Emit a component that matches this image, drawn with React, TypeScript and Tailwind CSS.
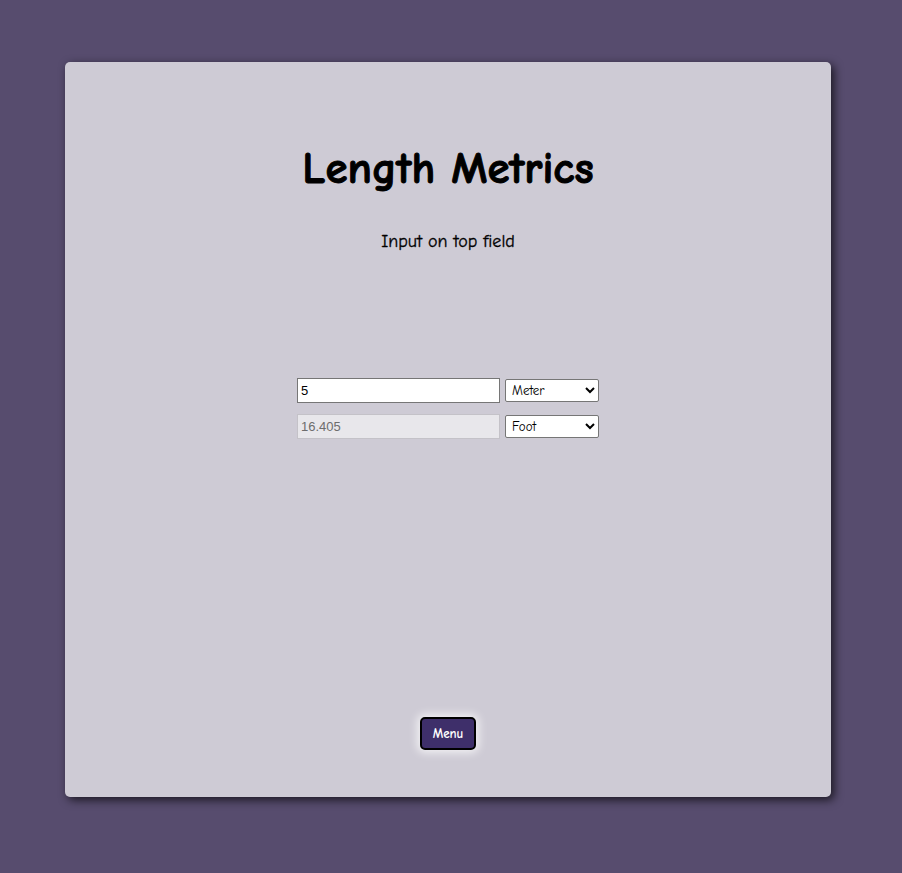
import React from "react";

export default function App() {
  const comic = { fontFamily: '"Comic Sans MS", "Comic Neue", "Lato", sans-serif' };
  return (
    <div className="min-h-[873px] w-[902px] bg-[#574c6e] pt-[62px] pl-[65px]" style={comic}>
      <div className="w-[766px] h-[735px] bg-[#cecbd5] rounded-[5px] shadow-[3px_3px_10px_rgba(0,0,0,0.7)] flex flex-col items-center">
        <h1 className="mt-[81px] text-[45px] leading-[50px] font-black text-black h-[50px] flex items-center [-webkit-text-stroke:1px_black]">
          Length Metrics
        </h1>
        <p className="mt-[38px] text-[18px] leading-[22px] text-black [-webkit-text-stroke:0.3px_black]">Input on top field</p>
        <div className="mt-[125px] flex flex-col gap-[11px]">
          <div className="flex items-center gap-[5px]">
            <input
              defaultValue="5"
              className="w-[203px] h-[25px] bg-white border border-[#767676] px-[3px] text-[13px] text-black font-['Liberation_Sans',sans-serif] outline-none"
            />
            <select defaultValue="Meter" className="w-[94px] h-[23px] bg-white border border-[#767676] rounded-[2px] text-[13px] text-black px-[2px]">
              <option>Meter</option>
              <option>Foot</option>
            </select>
          </div>
          <div className="flex items-center gap-[5px]">
            <input
              value="16.405"
              disabled
              readOnly
              className="w-[203px] h-[25px] bg-[#e8e7eb] border border-[#c4c2c8] px-[3px] text-[13px] text-[#6d6d6d] font-['Liberation_Sans',sans-serif]"
            />
            <select defaultValue="Foot" className="w-[94px] h-[23px] bg-white border border-[#767676] rounded-[2px] text-[13px] text-black px-[2px]">
              <option>Meter</option>
              <option>Foot</option>
            </select>
          </div>
        </div>
        <button className="mt-[278px] w-[56px] h-[33px] bg-[#3e2f6a] border-2 border-black rounded-[5px] text-white text-[13px] font-bold shadow-[0_0_8px_3px_rgba(255,255,255,0.7)]">
          Menu
        </button>
      </div>
    </div>
  );
}
